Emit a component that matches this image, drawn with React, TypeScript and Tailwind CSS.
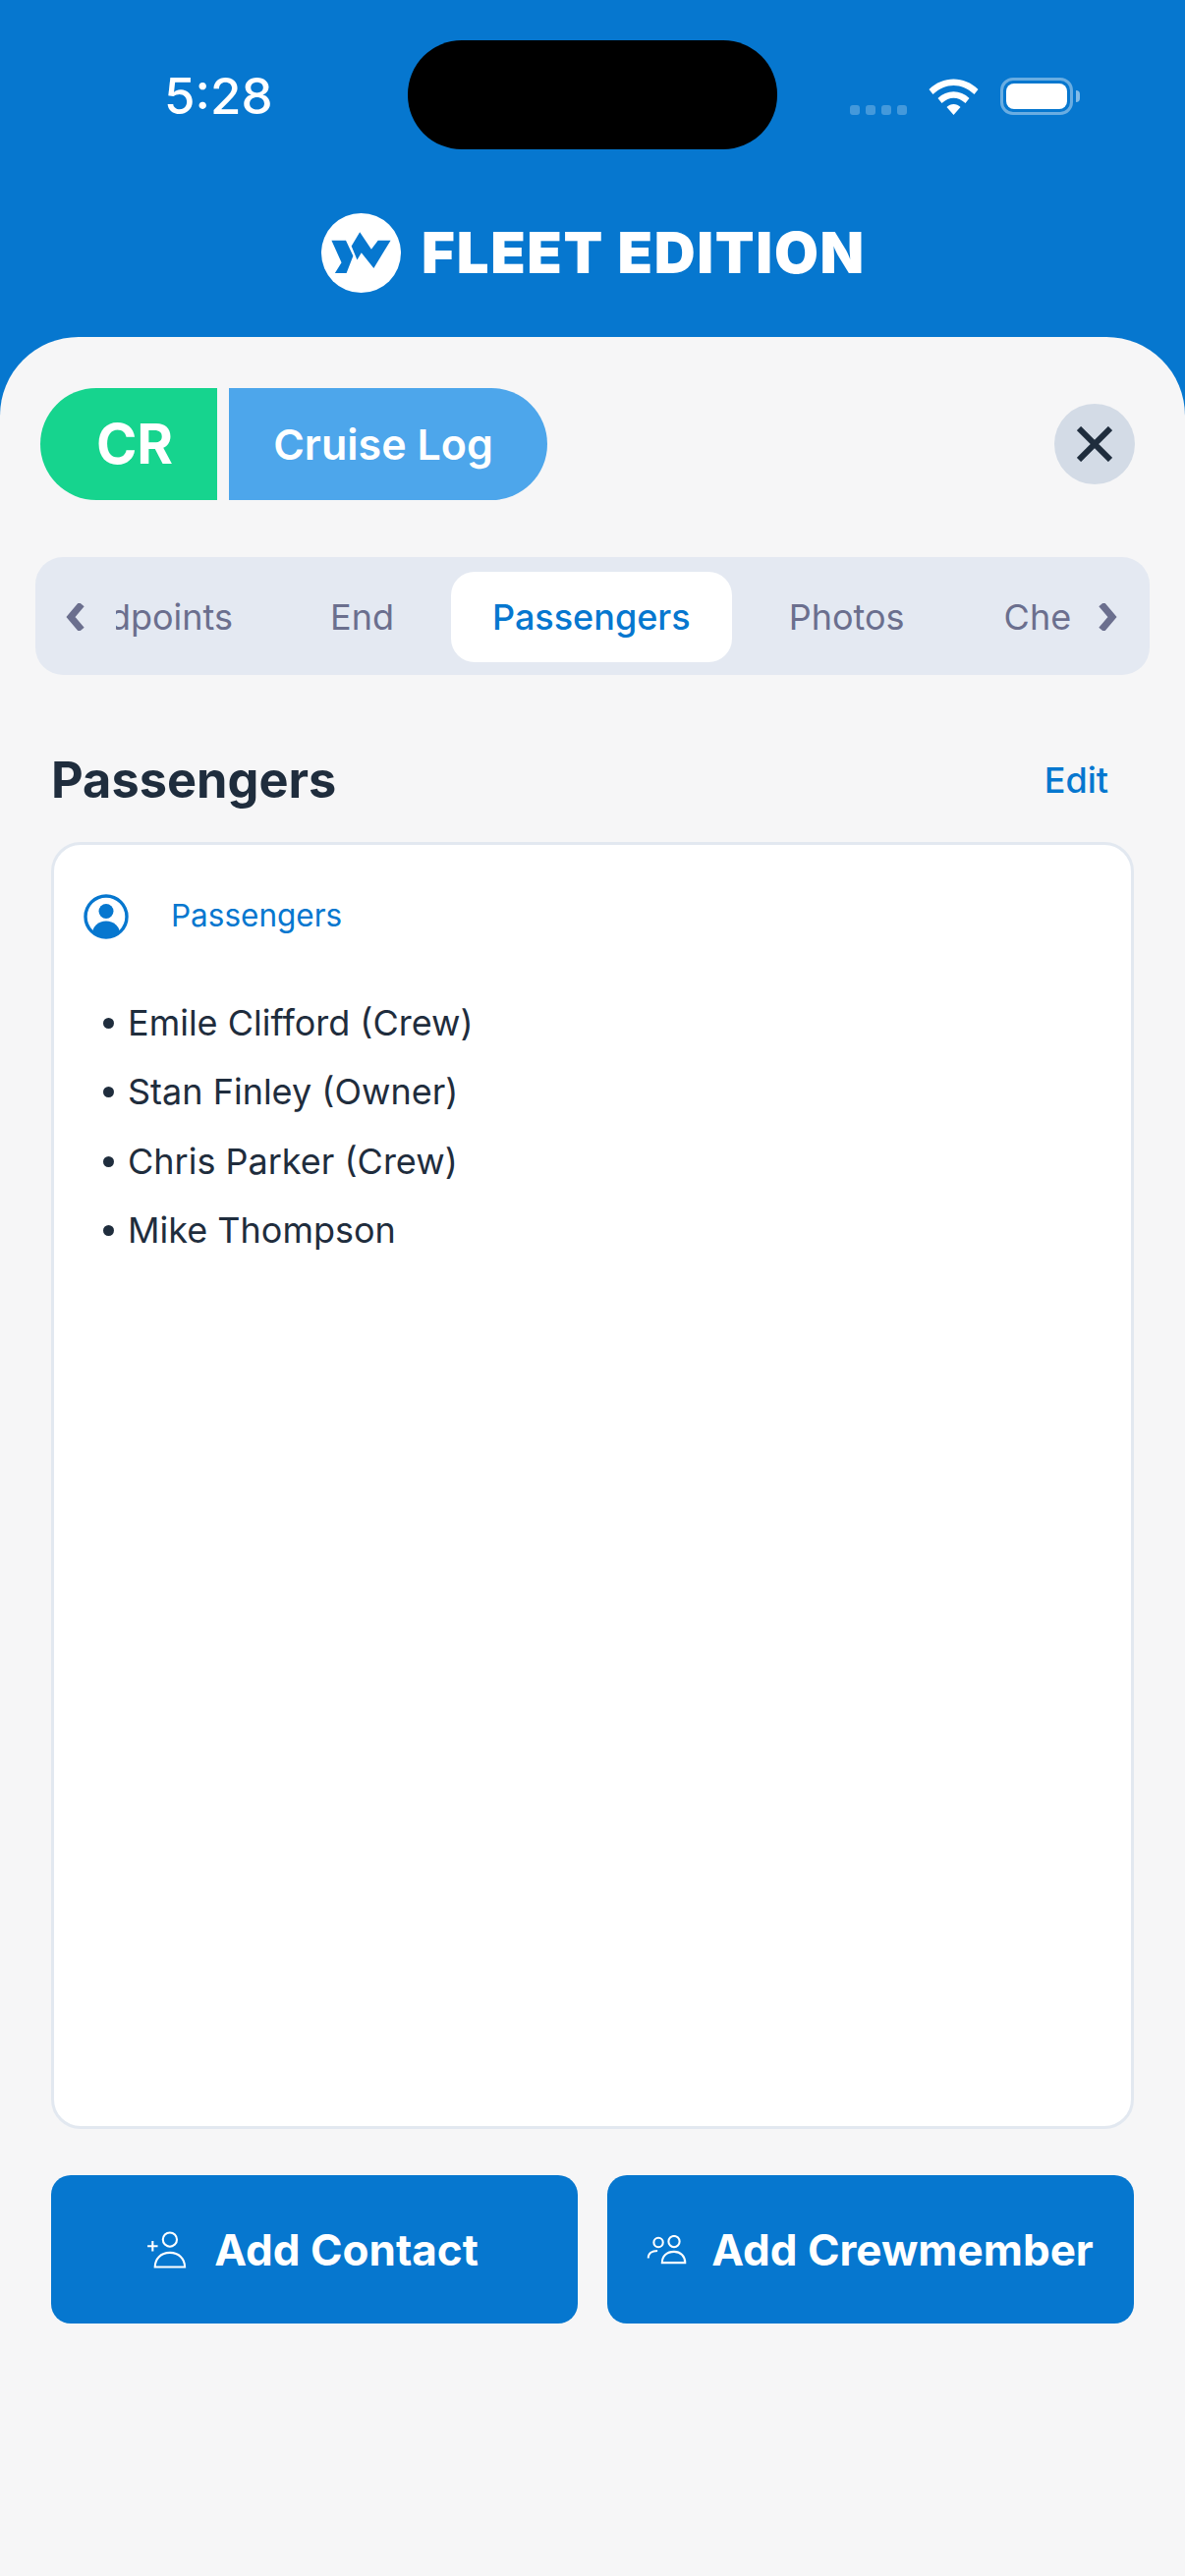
const passengers = [
  'Emile Clifford (Crew)',
  'Stan Finley (Owner)',
  'Chris Parker (Crew)',
  'Mike Thompson',
];

function WifiIcon() {
  return (
    <svg width="51" height="37" viewBox="0 0 50 37" fill="#fff">
      <path d="M0 11 C14 -3 36 -3 50 11 L46 16 C33 4 17 4 4 16 Z" />
      <path d="M9 20 C18 11 32 11 41 20 L37 25 C29 18 21 18 13 25 Z" />
      <path d="M18 29 C22 25 28 25 32 29 L25 37 Z" />
    </svg>
  );
}

function BatteryIcon() {
  return (
    <div className="flex items-center gap-[3px]">
      <div className="w-[74px] h-[38px] rounded-[13px] border-[3px] border-white/40 p-[3px] box-border">
        <div className="w-full h-full rounded-[8px] bg-white" />
      </div>
      <div className="w-[4px] h-[12px] rounded-r-full bg-white/50" />
    </div>
  );
}

function LogoMark() {
  return (
    <svg width="81" height="81" viewBox="0 0 80 80" className="shrink-0">
      <circle cx="40" cy="40" r="40" fill="#fff" />
      <path
        d="M10.3 27.3 H24.7 L32 43 L25.3 60.3 H13.7 L20.3 49.7 Z"
        fill="#0677CF"
      />
      <path
        d="M38.7 19 L50.3 36.3 L57 27.3 H69.7 L52.7 55.3 L40.3 39.7 L36 47 L30.3 33 Z"
        fill="#0677CF"
      />
    </svg>
  );
}

function PersonCircleIcon() {
  return (
    <svg width="46" height="46" viewBox="0 0 46 46" className="shrink-0">
      <defs>
        <clipPath id="inner">
          <circle cx="23" cy="23" r="20" />
        </clipPath>
      </defs>
      <circle cx="23" cy="23" r="21" fill="none" stroke="#0677CF" strokeWidth="3.4" />
      <circle cx="23" cy="17.5" r="7.5" fill="#0677CF" />
      <ellipse cx="23" cy="40" rx="14" ry="12.5" fill="#0677CF" clipPath="url(#inner)" />
    </svg>
  );
}

function AddContactIcon() {
  return (
    <svg width="42" height="38" viewBox="0 0 44 40" fill="none" stroke="#fff" strokeWidth="2.2">
      <circle cx="24" cy="9" r="7.5" />
      <path d="M8 38.5 C8 30 14 23 24 23 C34 23 40 30 40 38.5 Z" />
      <path d="M0 16 H11 M5.5 10.5 V21.5" />
    </svg>
  );
}

function AddCrewIcon() {
  return (
    <svg width="41" height="30" viewBox="0 0 42 32" fill="none" stroke="#fff" strokeWidth="2.2">
      <circle cx="12" cy="8" r="5" />
      <circle cx="29" cy="7" r="6" />
      <path d="M1 25 C1 20 5 17 11 17" />
      <path d="M16 30 C16 23 21 18 29 18 C36 18 41 23 41 30 Z" />
    </svg>
  );
}

export default function App() {
  return (
    <div
      className="w-[1206px] h-[2622px] bg-[#0677CF] flex flex-col overflow-hidden"
      style={{ fontFamily: 'Inter, "Noto Sans", sans-serif' }}
    >
      <div className="h-[343px] shrink-0 flex flex-col">
        <div className="flex items-start pt-[41px] pl-[167px]">
          <span className="w-[248px] pt-[28px] text-[51px] leading-[58px] font-medium text-white">
            5:28
          </span>
          <div className="w-[376px] h-[111px] rounded-[55px] bg-black" />
          <div className="flex items-end pl-[74px] pt-[38px]">
            <div className="flex gap-[6px] mr-[22px]">
              <div className="w-[10px] h-[10px] rounded-[3px] bg-white/25" />
              <div className="w-[10px] h-[10px] rounded-[3px] bg-white/25" />
              <div className="w-[10px] h-[10px] rounded-[3px] bg-white/25" />
              <div className="w-[10px] h-[10px] rounded-[3px] bg-white/25" />
            </div>
            <WifiIcon />
            <div className="ml-[22px]">
              <BatteryIcon />
            </div>
          </div>
        </div>
        <div className="flex items-center justify-center gap-[21px] mt-[65px] pl-[2px]">
          <LogoMark />
          <span className="text-[58px] leading-[58px] font-black text-white tracking-[1.7px] -translate-y-[1px]">
            FLEET EDITION
          </span>
        </div>
      </div>

      <div className="flex-1 bg-[#F6F6F7] rounded-t-[80px] flex flex-col">
        <div className="flex items-center justify-between pt-[52px] pl-[41px] pr-[50px]">
          <div className="flex gap-[12px]">
            <div className="w-[180px] h-[114px] pl-[12px] bg-[#16D48E] rounded-l-[57px] flex items-center justify-center text-[56px] font-bold text-white">
              CR
            </div>
            <div className="w-[324px] h-[114px] pr-[10px] bg-[#4DA6EB] rounded-r-[57px] flex items-center justify-center text-[43px] font-semibold text-white">
              Cruise Log
            </div>
          </div>
          <div className="w-[82px] h-[82px] -translate-x-[1px] rounded-full bg-[#D3DBE6] flex items-center justify-center">
            <svg width="36" height="36" viewBox="0 0 36 36">
              <path d="M2 2 L34 34 M34 2 L2 34" fill="none" stroke="#1F2D3D" strokeWidth="6" />
            </svg>
          </div>
        </div>

        <div className="mt-[58px] mx-[36px] h-[120px] pt-[2px] rounded-[28px] bg-[#E4E9F2] flex items-center">
          <svg width="22" height="28" viewBox="0 0 22 28" className="ml-[29px] shrink-0">
            <path d="M18 1 L7 14 L18 27" fill="none" stroke="#6B6F8E" strokeWidth="7" />
          </svg>
          <div className="w-[972px] ml-[31px] overflow-hidden shrink-0">
            <div className="flex items-center gap-[15px] text-[36px] text-[#6B6F8E] whitespace-nowrap -ml-[93px]">
              <div className="pl-[43px] pr-[41px]">Endpoints</div>
              <div className="px-[43px]">End</div>
              <div className="h-[92px] px-[42px] rounded-[24px] bg-white text-[#0677CF] font-medium flex items-center">
                Passengers
              </div>
              <div className="px-[43px]">Photos</div>
              <div className="px-[43px]">Checklist</div>
            </div>
          </div>
          <svg width="22" height="28" viewBox="0 0 22 28" className="ml-[27px] shrink-0">
            <path d="M4 1 L15 14 L4 27" fill="none" stroke="#6B6F8E" strokeWidth="7" />
          </svg>
        </div>

        <div className="flex items-center justify-between mt-[77px] pl-[52px] pr-[78px]">
          <h1 className="text-[50.5px] leading-[60px] font-bold text-[#1F2D3D]">Passengers</h1>
          <button className="text-[36px] leading-[46px] font-medium text-[#0677CF]">Edit</button>
        </div>

        <div className="mt-[33px] mx-[52px] h-[1310px] rounded-[30px] border-[3px] border-[#E2E8F0] bg-white pt-[50px] px-[30px]">
          <div className="flex items-center gap-[43px]">
            <PersonCircleIcon />
            <span className="text-[31.5px] leading-[46px] text-[#0677CF] -translate-y-[1px]">Passengers</span>
          </div>
          <ul className="mt-[50px] flex flex-col text-[36px] leading-[70.4px] text-[#1F2D3D]">
            {passengers.map((name) => (
              <li key={name} className="flex items-center pl-[20px]">
                <span className="w-[11px] h-[11px] rounded-full bg-[#1F2D3D] mr-[14px]" />
                {name}
              </li>
            ))}
          </ul>
        </div>

        <div className="mt-[47px] mx-[52px] grid grid-cols-2 gap-[30px]">
          <button className="h-[151px] pr-[3px] rounded-[20px] bg-[#0677CF] flex items-center justify-center gap-[26px] text-[44px] font-bold text-white">
            <AddContactIcon />
            Add Contact
          </button>
          <button className="h-[151px] pr-[1px] rounded-[20px] bg-[#0677CF] flex items-center justify-center gap-[25px] text-[44px] font-bold text-white">
            <AddCrewIcon />
            Add Crewmember
          </button>
        </div>
      </div>
    </div>
  );
}
